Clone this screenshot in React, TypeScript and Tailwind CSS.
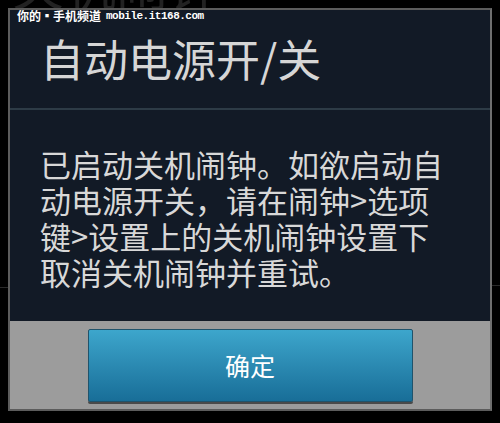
import React from "react";

const cjk = { fontFamily: '"Noto Sans CJK SC", "Noto Sans", sans-serif' };

export default function App() {
  return (
    <div className="relative w-[500px] h-[423px] bg-black overflow-hidden" style={cjk}>
      {/* ghost background content */}
      <div className="flex flex-col">
        <div className="ml-[12px] -mt-[42px] text-[52px] leading-[52px] text-[#222222] whitespace-nowrap">关机闹钟</div>
        <div className="mt-[277px] flex justify-between">
          <div className="w-[8px] h-px bg-[#2a2a2a]" />
          <div className="w-[9px] h-px bg-[#2a2a2a] -mt-[2px]" />
        </div>
      </div>

      {/* dialog */}
      <div className="absolute left-[8px] top-[8px] w-[484px] h-[403px] border-2 border-[#5c5c5c] border-r-[#6e6e6e] flex flex-col bg-[#121a26]">
        <div className="h-[98px] flex items-center pl-[30px] pb-[2px] text-[44px] leading-none text-[#d6d6d6] whitespace-nowrap">
          自动电源开/关
        </div>
        <div className="h-[2px] bg-[#2d3b46]" />
        <div className="flex-1 pl-[30px] pt-[36px] text-[31px] leading-[36px] text-[#d8d8d8] whitespace-nowrap">
          <div>已启动关机闹钟。如欲启动自</div>
          <div>动电源开关，请在闹钟&gt;选项</div>
          <div>键&gt;设置上的关机闹钟设置下</div>
          <div>取消关机闹钟并重试。</div>
        </div>
        <div className="h-[88px] bg-[#9c9c9c] flex justify-center pt-[8px] pb-[7px]">
          <button className="w-[325px] h-[73px] rounded-[2px] border border-[#20536b] shadow-[0_2px_0_#4a4a4a] bg-gradient-to-b from-[#3da6cc] to-[#186e98] text-white text-[25px] leading-none flex items-center justify-center">
            确定
          </button>
        </div>
      </div>

      {/* watermark */}
      <div className="absolute left-[17px] top-[8px] flex items-center gap-[5px] text-white whitespace-nowrap">
        <span className="text-[12px] leading-[16px] font-bold">你的▪手机频道</span>
        <span className="text-[11px] leading-[16px] font-bold tracking-[-0.5px]" style={{ fontFamily: '"Liberation Mono", monospace' }}>
          mobile.it168.com
        </span>
      </div>
    </div>
  );
}
